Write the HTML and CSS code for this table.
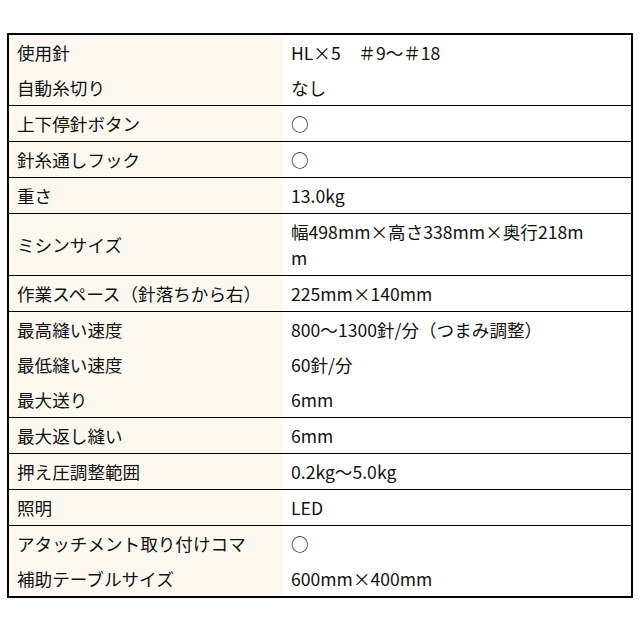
FILE: index.html
```html
<!DOCTYPE html>
<html lang="ja">
<head>
<meta charset="utf-8">
<title>仕様</title>
<link rel="stylesheet" href="styles.css">
</head>
<body>
<div class="page">
<table class="spec">
<tbody>
<tr><th>使用針</th><td>HL×5　＃9～＃18</td></tr>
<tr class="sep"><th>自動糸切り</th><td>なし</td></tr>
<tr class="sep"><th>上下停針ボタン</th><td>○</td></tr>
<tr class="sep"><th>針糸通しフック</th><td>○</td></tr>
<tr class="sep"><th>重さ</th><td>13.0kg</td></tr>
<tr class="sep"><th>ミシンサイズ</th><td>幅498mm×高さ338mm×奥行218m<br>m</td></tr>
<tr class="sep"><th>作業スペース（針落ちから右）</th><td>225mm×140mm</td></tr>
<tr><th>最高縫い速度</th><td>800～1300針/分（つまみ調整）</td></tr>
<tr><th>最低縫い速度</th><td>60針/分</td></tr>
<tr class="sep"><th>最大送り</th><td>6mm</td></tr>
<tr class="sep"><th>最大返し縫い</th><td>6mm</td></tr>
<tr class="sep"><th>押え圧調整範囲</th><td>0.2kg～5.0kg</td></tr>
<tr class="sep"><th>照明</th><td>LED</td></tr>
<tr><th>アタッチメント取り付けコマ</th><td>○</td></tr>
<tr><th>補助テーブルサイズ</th><td>600mm×400mm</td></tr>
</tbody>
</table>
</div>
</body>
</html>
```
FILE: styles.css
```css
html, body {
  margin: 0;
  padding: 0;
  background: #ffffff;
}

.page {
  padding: 33px 7px 0 7px;
}

.spec {
  width: 626px;
  border-collapse: collapse;
  border: 2px solid #000;
  font-family: "Noto Sans CJK JP", "Noto Sans", sans-serif;
  font-size: 17.6px;
  line-height: 26px;
  color: #111;
}

.spec th,
.spec td {
  padding: 4.5px 8px 4.5px 8px;
  text-align: left;
  font-weight: normal;
  vertical-align: middle;
}

.spec th {
  width: 258px;
  background: #fdf9f0;
  white-space: nowrap;
}

.spec td {
  background: #ffffff;
}

.spec .sep th,
.spec .sep td {
  border-bottom: 1px solid #000;
}
```
